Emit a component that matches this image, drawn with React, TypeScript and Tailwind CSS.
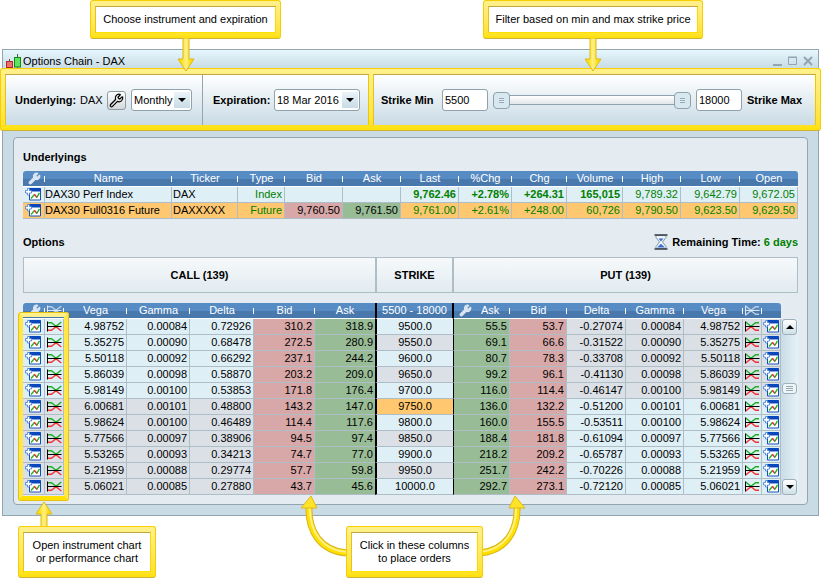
import { useState } from "react";
import type { ReactNode } from "react";
import clsx from "clsx";
import { Wrench } from "lucide-react";

type Column = { label: ReactNode; width: string; name?: string };

const CALL_ROWS = [
  ["9500.0", "4.98752", "0.00084", "0.72926", "310.2", "318.9", "55.5", "53.7", "-0.27074"],
  ["9550.0", "5.35275", "0.00090", "0.68478", "272.5", "280.9", "69.1", "66.6", "-0.31522"],
  ["9600.0", "5.50118", "0.00092", "0.66292", "237.1", "244.2", "80.7", "78.3", "-0.33708"],
  ["9650.0", "5.86039", "0.00098", "0.58870", "203.2", "209.0", "99.2", "96.1", "-0.41130"],
  ["9700.0", "5.98149", "0.00100", "0.53853", "171.8", "176.4", "116.0", "114.4", "-0.46147"],
  ["9750.0", "6.00681", "0.00101", "0.48800", "143.2", "147.0", "136.0", "132.2", "-0.51200"],
  ["9800.0", "5.98624", "0.00100", "0.46489", "114.4", "117.6", "160.0", "155.5", "-0.53511"],
  ["9850.0", "5.77566", "0.00097", "0.38906", "94.5", "97.4", "188.4", "181.8", "-0.61094"],
  ["9900.0", "5.53265", "0.00093", "0.34213", "74.7", "77.0", "218.2", "209.2", "-0.65787"],
  ["9950.0", "5.21959", "0.00088", "0.29774", "57.7", "59.8", "251.7", "242.2", "-0.70226"],
  ["10000.0", "5.06021", "0.00085", "0.27880", "43.7", "45.6", "292.7", "273.1", "-0.72120"],
];

const ATM_INDEX = 5;

const UNDERLYINGS = [
  {
    name: "DAX30 Perf Index",
    ticker: "DAX",
    type: "Index",
    bid: "",
    ask: "",
    values: ["9,762.46", "+2.78%", "+264.31", "165,015", "9,789.32", "9,642.79", "9,672.05"],
    live: true,
  },
  {
    name: "DAX30 Full0316 Future",
    ticker: "DAXXXXX",
    type: "Future",
    bid: "9,760.50",
    ask: "9,761.50",
    values: ["9,761.00", "+2.61%", "+248.00", "60,726", "9,790.50", "9,623.50", "9,629.50"],
    live: false,
  },
];

function HeaderWrench() {
  return <Wrench size={13} strokeWidth={2} className="fill-[#dbe6f2] text-[#dbe6f2]" aria-hidden />;
}

function ChartIcon() {
  return (
    <svg viewBox="0 0 16 13" className="block h-[13px] w-4" aria-hidden>
      <path d="M4.500.5h11v11.500h-11z" fill="#fff" stroke="#1450bc" />
      <path d="M4 0h11l1 1v2.500H4z" fill="#0a46bc" />
      <path d="M6 10.500 9.500 6.500" stroke="#1fae2a" strokeWidth="1.400" fill="none" />
      <path d="M9.300 6.300 12 9.500" stroke="#ee2c2c" strokeWidth="1.500" fill="none" />
      <path d="M11.800 9.500 14.500 4.800" stroke="#1fae2a" strokeWidth="1.400" fill="none" />
      <path d="M2.500.5h2v2h2v2.500h-2v2h-2v-2h-2V2.500h2z" fill="#fff" stroke="#3f78d4" strokeWidth="0.800" />
    </svg>
  );
}

function PayoffIcon({ flip = false, mono = false }: { flip?: boolean; mono?: boolean }) {
  const up = mono ? "#b9cde4" : "#1fae2a";
  const down = mono ? "#b9cde4" : "#f53232";
  const axis = mono ? "#dbe6f2" : "#000";
  return (
    <svg viewBox="0 0 15 11" className="block h-[11px] w-[15px]" fill="none" aria-hidden>
      <g transform={flip ? "matrix(-1 0 0 1 15 0)" : undefined} strokeWidth="1.400">
        <path d="M1 1.700h3.500L8 4.600h2L14.300 1" stroke={up} />
        <path d="M1 9.300h3.500L8 6.400h2L14.300 10" stroke={down} />
      </g>
      <path d="M0.500 0.500v10M0 5.500h14.500" stroke={axis} />
    </svg>
  );
}

function CandleIcon() {
  return (
    <svg viewBox="0 0 16 14" className="h-[14px] w-4" aria-hidden>
      <path d="M3.500 5v3M11.500 0v14" stroke="#555" />
      <rect x="0.500" y="7.500" width="6" height="6" fill="#f07070" stroke="#b02a2a" />
      <rect x="8.500" y="3.500" width="6" height="9.500" fill="#5ee45e" stroke="#128a12" />
    </svg>
  );
}

function Hourglass() {
  return (
    <svg viewBox="0 0 14 16" className="h-4 w-[14px]" aria-hidden>
      <path d="M2 1.500h10v2L8.500 8l3.500 4.500v2H2v-2L5.500 8 2 3.500z" fill="#eef4fa" stroke="#8496a8" />
      <path d="M4.500 4.500h5L7 7.500z" fill="#3c6fd0" />
      <path d="M3 13.500 7 9.800l4 3.700z" fill="#3c6fd0" />
      <path d="M0.500 1h13M0.500 15h13" stroke="#333c46" strokeWidth="1.500" />
    </svg>
  );
}

function Frame({ children, className }: { children: ReactNode; className?: string }) {
  return (
    <div
      className={clsx(
        "rounded-[3px] border border-[#f7cf00] border-b-[#cdb13a] bg-linear-to-b from-[#fff08c] to-[#ffe100] px-1 py-[5px]",
        className,
      )}
    >
      {children}
    </div>
  );
}

function Callout({ children, className }: { children: ReactNode; className: string }) {
  return (
    <Frame className={clsx("absolute", className)}>
      <p className="border border-t-[#bfa640] border-r-[#ffd800] border-b-[#ffe100] border-l-[#e6c21a] bg-white py-[6px] text-center leading-[13px]">
        {children}
      </p>
    </Frame>
  );
}

function Arrow({ up = false, className }: { up?: boolean; className: string }) {
  return (
    <svg viewBox="0 0 18 34" className={clsx("absolute h-[34px] w-[18px]", className)} aria-hidden>
      <defs>
        <linearGradient id="arrow" x1="0" x2="1">
          <stop offset="0.2" stopColor="#ffe100" />
          <stop offset="0.5" stopColor="#fff08c" />
          <stop offset="0.8" stopColor="#ffdc00" />
        </linearGradient>
      </defs>
      <path
        d="M6 0h6v21h5L9 33 1 21h5z"
        fill="url(#arrow)"
        stroke="#dcb820"
        transform={up ? "matrix(1 0 0 -1 0 34)" : undefined}
      />
    </svg>
  );
}

function CurvedArrow({ flip = false, className }: { flip?: boolean; className: string }) {
  return (
    <svg viewBox="0 0 48 64" className={clsx("absolute h-16 w-12", className)} fill="none" aria-hidden>
      <g transform={flip ? "matrix(-1 0 0 1 48 0)" : undefined}>
        <path d="M9 11C8 36 20 56 47 58" stroke="#d9b520" strokeWidth="7" />
        <path d="M9 11C8 36 20 56 47 58" stroke="#ffe100" strokeWidth="5" />
        <path d="M10 11C9 35 21 55 47 57" stroke="#fff08c" strokeWidth="2" />
        <path d="M11 1 17 13H1z" fill="#ffe326" stroke="#dcb820" />
      </g>
    </svg>
  );
}

function Select({ id, options, className }: { id: string; options: string[]; className: string }) {
  return (
    <div className={clsx("relative", className)}>
      <select
        id={id}
        aria-label={id}
        className="block h-[22px] w-full appearance-none rounded-[3px] border border-[#8fa2ad] bg-white pl-[2px] outline-none"
      >
        {options.map((o) => (
          <option key={o}>{o}</option>
        ))}
      </select>
      <span className="pointer-events-none absolute top-[3px] right-[2px] flex size-4 items-center justify-center bg-linear-to-b from-[#e9f4f9] to-[#c9dbe5]">
        <svg viewBox="0 0 8 4" className="h-1 w-2" aria-hidden>
          <path d="M0 0h8L4 4z" />
        </svg>
      </span>
    </div>
  );
}

const RANGE =
  "pointer-events-none absolute inset-0 h-full w-full appearance-none bg-transparent outline-none [&::-webkit-slider-thumb]:pointer-events-auto [&::-webkit-slider-thumb]:size-[17px] [&::-webkit-slider-thumb]:appearance-none [&::-webkit-slider-thumb]:rounded-[4px] [&::-webkit-slider-thumb]:border [&::-webkit-slider-thumb]:border-[#8fa2ad] [&::-webkit-slider-thumb]:[background:repeating-linear-gradient(#94a9b5_0_1px,#e3eff5_1px_2px)_center/5px_5px_no-repeat,#d8e8f0]";

function StrikeFilter() {
  const [min, setMin] = useState(5500);
  const [max, setMax] = useState(18000);

  return (
    <div className="flex flex-1 items-center gap-[5px] pr-[9px] pl-[7px]">
      <label htmlFor="strike-min" className="w-[56px] font-bold whitespace-nowrap">
        Strike Min
      </label>
      <input
        id="strike-min"
        value={min}
        onChange={(e) => setMin(Number(e.target.value))}
        className="h-[22px] w-[46px] rounded-[3px] border border-[#8fa2ad] bg-white px-[2px] outline-none"
      />
      <div className="relative flex h-[17px] flex-1 items-center">
        <div className="mx-2 h-[10px] flex-1 border-y border-[#8fa2ad] bg-linear-to-b from-white to-[#e2e6e8]" />
        <input
          type="range"
          aria-label="Minimum strike"
          min={5500}
          max={18000}
          value={min}
          onChange={(e) => setMin(Number(e.target.value))}
          className={RANGE}
        />
        <input
          type="range"
          aria-label="Maximum strike"
          min={5500}
          max={18000}
          value={max}
          onChange={(e) => setMax(Number(e.target.value))}
          className={RANGE}
        />
      </div>
      <input
        id="strike-max"
        value={max}
        onChange={(e) => setMax(Number(e.target.value))}
        className="h-[22px] w-[46px] rounded-[3px] border border-[#8fa2ad] bg-white px-[2px] outline-none"
      />
      <label htmlFor="strike-max" className="w-[59px] font-bold whitespace-nowrap">
        Strike Max
      </label>
    </div>
  );
}

const HEAD =
  "relative h-4 border-b border-white bg-[linear-gradient(#578bc4_0_8px,#4878ac_8px)] p-0 text-center leading-[15px] font-normal text-white";
const TICK = "after:absolute after:top-[5px] after:right-0 after:h-[6px] after:w-px after:bg-white";
const CELL = "h-4 border-r border-b border-[#afbdc6] p-0 leading-[15px] whitespace-nowrap";
const NUM = "pr-[2px] text-right";
const BID = "bg-[#d8a8a8]";
const ASK = "bg-[#98bc96]";
const ITM = "bg-[#dfeff6]";
const OTM = "bg-[#dbe0e7]";

const UNDERLYING_COLUMNS: Column[] = [
  { label: <HeaderWrench />, width: "w-[22px]", name: "settings" },
  { label: "Name", width: "w-[127px]" },
  { label: "Ticker", width: "w-[66px]" },
  { label: "Type", width: "w-[47px]" },
  { label: "Bid", width: "w-[58px]" },
  { label: "Ask", width: "w-[58px]" },
  { label: "Last", width: "w-[58px]" },
  { label: "%Chg", width: "w-[53px]" },
  { label: "Chg", width: "w-[55px]" },
  { label: "Volume", width: "w-[56px]" },
  { label: "High", width: "w-[58px]" },
  { label: "Low", width: "w-[59px]" },
  { label: "Open", width: "w-[58px]" },
];

function UnderlyingsTable() {
  return (
    <table className="w-full table-fixed border-separate border-spacing-0">
      <thead>
        <tr>
          {UNDERLYING_COLUMNS.map((c, i) => (
            <th
              key={i}
              className={clsx(HEAD, c.width, {
                "rounded-tl-[3px]": i === 0,
                "rounded-tr-[3px]": i === 12,
                [TICK]: i < 12,
              })}
            >
              {c.name ? <span className="flex justify-center">{c.label}</span> : c.label}
            </th>
          ))}
        </tr>
      </thead>
      <tbody>
        {UNDERLYINGS.map((u) => (
          <tr key={u.ticker} className={u.live ? ITM : "bg-[#ffc870]"}>
            <td className={CELL}>
              <button className="ml-[2px] block" aria-label={`Open ${u.name} chart`}>
                <ChartIcon />
              </button>
            </td>
            <td className={CELL}>{u.name}</td>
            <td className={clsx(CELL, "pl-px")}>{u.ticker}</td>
            <td className={clsx(CELL, NUM, "text-[#008000]")}>{u.type}</td>
            <td className={clsx(CELL, NUM, u.bid && BID)}>{u.bid}</td>
            <td className={clsx(CELL, NUM, u.ask && ASK)}>{u.ask}</td>
            {u.values.map((v, i) => (
              <td key={i} className={clsx(CELL, NUM, "text-[#008000]", u.live && i < 4 && "font-bold")}>
                {v}
              </td>
            ))}
          </tr>
        ))}
      </tbody>
    </table>
  );
}

function OptionsTable() {
  return (
    <table className="flex-1 table-fixed border-separate border-spacing-0">
      <thead>
        <tr>
          <th className={clsx(HEAD, TICK, "w-[22px] rounded-tl-[3px]")}>
            <span className="flex justify-center">
              <HeaderWrench />
            </span>
          </th>
          <th className={clsx(HEAD, TICK, "w-[19px]")}>
            <span className="flex justify-center">
              <PayoffIcon mono />
            </span>
          </th>
          <th className={clsx(HEAD, TICK, "w-[63px]")}>Vega</th>
          <th className={clsx(HEAD, TICK, "w-[63px]")}>Gamma</th>
          <th className={clsx(HEAD, TICK, "w-[64px]")}>Delta</th>
          <th className={clsx(HEAD, TICK, "w-[61px]")}>Bid</th>
          <th className={clsx(HEAD, "w-[60px]")}>Ask</th>
          <th className={clsx(HEAD, "w-[79px] border-x-2 border-x-black whitespace-nowrap")}>5500 - 18000</th>
          <th className={clsx(HEAD, TICK, "w-[56px]")}>
            <span className="flex items-center gap-[9px] pl-[5px]">
              <HeaderWrench />
              Ask
            </span>
          </th>
          <th className={clsx(HEAD, TICK, "w-[57px]")}>Bid</th>
          <th className={clsx(HEAD, TICK, "w-[59px]")}>Delta</th>
          <th className={clsx(HEAD, TICK, "w-[58px]")}>Gamma</th>
          <th className={clsx(HEAD, TICK, "w-[59px]")}>Vega</th>
          <th className={clsx(HEAD, TICK, "w-[19px]")}>
            <span className="flex justify-center">
              <PayoffIcon mono flip />
            </span>
          </th>
          <th className={clsx(HEAD, "w-[19px] rounded-tr-[3px]")} />
        </tr>
      </thead>
      <tbody>
        {CALL_ROWS.map(([strike, vega, gamma, delta, callBid, callAsk, putAsk, putBid, putDelta], i) => {
          const call = i < ATM_INDEX ? ITM : OTM;
          const put = i < ATM_INDEX ? OTM : ITM;
          const strikeColor = i === ATM_INDEX ? "bg-[#ffc870]" : i % 2 ? OTM : ITM;
          return (
            <tr key={strike}>
              <td className={clsx(CELL, call)}>
                <button className="ml-[2px] block" aria-label={`Call ${strike} chart`}>
                  <ChartIcon />
                </button>
              </td>
              <td className={clsx(CELL, call)}>
                <button className="ml-[2px] block" aria-label={`Call ${strike} performance`}>
                  <PayoffIcon />
                </button>
              </td>
              <td className={clsx(CELL, NUM, call)}>{vega}</td>
              <td className={clsx(CELL, NUM, call)}>{gamma}</td>
              <td className={clsx(CELL, NUM, call)}>{delta}</td>
              <td className={clsx(CELL, NUM, BID)}>{callBid}</td>
              <td className={clsx(CELL, NUM, ASK, "border-r-0")}>{callAsk}</td>
              <td className={clsx(CELL, strikeColor, "border-x-2 border-x-black text-center")}>{strike}</td>
              <td className={clsx(CELL, NUM, ASK)}>{putAsk}</td>
              <td className={clsx(CELL, NUM, BID)}>{putBid}</td>
              <td className={clsx(CELL, NUM, put)}>{putDelta}</td>
              <td className={clsx(CELL, NUM, put)}>{gamma}</td>
              <td className={clsx(CELL, NUM, put)}>{vega}</td>
              <td className={clsx(CELL, put)}>
                <button className="ml-[2px] block" aria-label={`Put ${strike} performance`}>
                  <PayoffIcon flip />
                </button>
              </td>
              <td className={clsx(CELL, put)}>
                <button className="ml-px block" aria-label={`Put ${strike} chart`}>
                  <ChartIcon />
                </button>
              </td>
            </tr>
          );
        })}
      </tbody>
    </table>
  );
}

function Scrollbar() {
  const button =
    "flex h-4 w-full items-center justify-center rounded-[3px] border border-[#9db0ba] bg-linear-to-b from-white to-[#cfdfe8]";
  return (
    <div className="mt-4 flex w-[17px] flex-col bg-linear-to-r from-[#c9dbe5] to-[#e6f2f8] px-px">
      <button className={button} aria-label="Scroll up">
        <svg viewBox="0 0 8 4" className="h-1 w-2" aria-hidden>
          <path d="M0 4h8L4 0z" />
        </svg>
      </button>
      <div className="flex-[48]" />
      <button
        className="flex h-[11px] w-full flex-col items-center justify-center gap-px rounded-[3px] border border-[#9db0ba] bg-[#eef5f9]"
        aria-label="Scroll position"
      >
        <span className="h-px w-[7px] bg-[#94a9b5]" />
        <span className="h-px w-[7px] bg-[#94a9b5]" />
        <span className="h-px w-[7px] bg-[#94a9b5]" />
      </button>
      <div className="flex-[85]" />
      <button className={button} aria-label="Scroll down">
        <svg viewBox="0 0 8 4" className="h-1 w-2" aria-hidden>
          <path d="M0 0h8L4 4z" />
        </svg>
      </button>
    </div>
  );
}

export default function App() {
  return (
    <main className="relative bg-white px-[2px] pt-[49px] pb-[62px] font-['Liberation_Sans',Arial,sans-serif] text-[11px] text-black">
      <section className="border border-[#93a5af] bg-[#c9dbe5] pb-[10px]">
        <header className="flex h-[18px] items-end justify-between bg-linear-to-b from-[#e6f7fd] to-[#c9dbe5] pr-[5px] pl-[3px]">
          <h1 className="flex items-end gap-px leading-[13px]">
            <CandleIcon />
            Options Chain - DAX
          </h1>
          <div className="flex gap-[5px] pb-[2px] text-[#93a5af]">
            <button aria-label="Minimize">
              <svg viewBox="0 0 10 10" className="size-[10px]" aria-hidden>
                <path d="M0 9h9" stroke="currentColor" strokeWidth="2" />
              </svg>
            </button>
            <button aria-label="Maximize">
              <svg viewBox="0 0 10 10" className="size-[10px]" fill="none" aria-hidden>
                <path d="M0.500 1.500h8v7h-8zM0 1h9" stroke="currentColor" />
              </svg>
            </button>
            <button aria-label="Close">
              <svg viewBox="0 0 10 10" className="size-[10px]" fill="none" aria-hidden>
                <path d="M1 1l8 8M9 1 1 9" stroke="currentColor" strokeWidth="2" />
              </svg>
            </button>
          </div>
        </header>

        <Frame className="-mx-[3px]">
          <form className="flex gap-1">
            <div className="flex h-[51px] border border-y-0 border-t border-t-[#bfa640] border-r-[#f0c800] border-l-[#e6c21a] bg-linear-to-b from-white to-[#c9dbe5]">
              <div className="flex w-[197px] items-center border-r border-[#93a5af] pl-[9px]">
                <span className="w-[65px] font-bold whitespace-nowrap">Underlying:</span>
                <span className="w-[27px]">DAX</span>
                <button
                  type="button"
                  aria-label="Choose instrument"
                  className="mr-[5px] flex size-[19px] items-center justify-center rounded-[3px] border border-[#8f9ba3] bg-linear-to-b from-white to-[#d4d8da]"
                >
                  <Wrench size={15} strokeWidth={2} aria-hidden />
                </button>
                <Select id="Period" options={["Monthly", "Weekly"]} className="w-[61px]" />
              </div>
              <div className="flex w-[165px] items-center pl-[10px]">
                <label htmlFor="Expiration" className="w-[61px] font-bold">
                  Expiration:
                </label>
                <Select id="Expiration" options={["18 Mar 2016", "15 Apr 2016"]} className="w-[86px]" />
              </div>
            </div>
            <div className="flex h-[51px] flex-1 border border-y-0 border-t border-t-[#bfa640] border-r-[#f0c800] border-l-[#e6c21a] bg-linear-to-b from-white to-[#c9dbe5]">
              <StrikeFilter />
            </div>
          </form>
        </Frame>

        <div className="mx-[10px] mt-[6px] rounded-[4px] border border-[#93a5af] bg-[#e4ecf2] px-[9px] pt-[11px] pb-[9px]">
          <h2 className="mb-[6px] leading-4 font-bold">Underlyings</h2>
          <UnderlyingsTable />

          <div className="mt-[15px] flex items-center justify-between leading-4 font-bold">
            <h2>Options</h2>
            <p className="flex items-center gap-1">
              <Hourglass />
              <span>
                Remaining Time: <span className="text-[#008000]">6 days</span>
              </span>
            </p>
          </div>

          <div className="mt-[7px] grid h-9 grid-cols-[351fr_79fr_343fr] border border-[#afbdc6] bg-linear-to-b from-[#f6f9fb] to-[#e2ebf0] text-center leading-[34px] font-bold">
            <h3>CALL (139)</h3>
            <h3 className="border-x-2 border-[#afbdc6]">STRIKE</h3>
            <h3>PUT (139)</h3>
          </div>

          <div className="relative mt-[10px] flex">
            <OptionsTable />
            <Scrollbar />
            <div className="pointer-events-none absolute top-[9px] -bottom-[6px] -left-[5px] w-[51px] rounded-[3px] border-5 border-x-[#ffe74a] border-t-[#fff08c] border-b-[#ffe100] outline outline-[#e8c010] -outline-offset-1" />
          </div>
        </div>
      </section>

      <Callout className="top-0 left-[90px] w-[191px]">Choose instrument and expiration</Callout>
      <Arrow className="top-[38px] left-[177px]" />
      <Callout className="top-0 left-[483px] w-[220px]">Filter based on min and max strike price</Callout>
      <Arrow className="top-[38px] left-[584px]" />

      <Arrow up className="top-[501px] left-[35px]" />
      <Callout className="top-[526px] left-[18px] w-[138px]">
        Open instrument chart
        <br />
        or performance chart
      </Callout>

      <CurvedArrow className="top-[495px] left-[300px]" />
      <CurvedArrow flip className="top-[495px] left-[478px]" />
      <Callout className="top-[526px] left-[346px] w-[137px]">
        Click in these columns
        <br />
        to place orders
      </Callout>
    </main>
  );
}
